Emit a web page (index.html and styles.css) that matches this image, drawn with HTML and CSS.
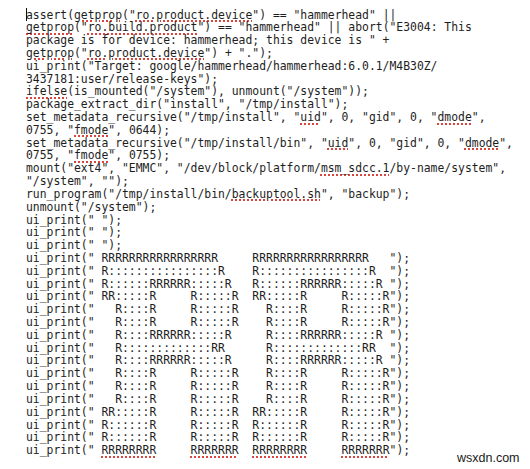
FILE: index.html
```html
<!DOCTYPE html>
<html>
<head>
<meta charset="utf-8">
<link rel="stylesheet" href="styles.css">
</head>
<body>
<div class="doc">
<span class="cursor"></span>
<pre class="code">assert(<span class="sp">getprop</span>("<span class="sp">ro.product.device</span>") == "hammerhead" ||
<span class="sp">getprop</span>("<span class="sp">ro.build.product</span>") == "hammerhead" || abort("E3004: This
package is for device: hammerhead; this device is " +
<span class="sp">getprop</span>("<span class="sp">ro.product.device</span>") + ".");
ui_print("Target: google/hammerhead/hammerhead:6.0.1/M4B30Z/
3437181:user/release-keys");
<span class="sp">ifelse</span>(is_mounted("/system"), unmount("/system"));
package_extract_dir("install", "/tmp/install");
set_metadata_recursive("/tmp/install", "<span class="sp">uid</span>", 0, "gid", 0, "<span class="sp">dmode</span>",
0755, "<span class="sp">fmode</span>", 0644);
set_metadata_recursive("/tmp/install/bin", "<span class="sp">uid</span>", 0, "gid", 0, "<span class="sp">dmode</span>",
0755, "<span class="sp">fmode</span>", 0755);
mount("ext4", "EMMC", "/dev/block/platform/<span class="sp">msm_sdcc.1</span>/by-name/system",
"/system", "");
run_program("/tmp/install/bin/<span class="sp">backuptool.sh</span>", "backup");
unmount("/system");
ui_print(" ");
ui_print(" ");
ui_print(" ");
ui_print(" RRRRRRRRRRRRRRRRR     RRRRRRRRRRRRRRRRR   ");
ui_print(" R::::::::::::::::R    R::::::::::::::::R  ");
ui_print(" R::::::RRRRRR:::::R   R::::::RRRRRR:::::R ");
ui_print(" RR:::::R     R:::::R  RR:::::R     R:::::R");
ui_print("   R::::R     R:::::R    R::::R     R:::::R");
ui_print("   R::::R     R:::::R    R::::R     R:::::R");
ui_print("   R::::RRRRRR:::::R     R::::RRRRRR:::::R ");
ui_print("   R:::::::::::::RR      R:::::::::::::RR  ");
ui_print("   R::::RRRRRR:::::R     R::::RRRRRR:::::R ");
ui_print("   R::::R     R:::::R    R::::R     R:::::R");
ui_print("   R::::R     R:::::R    R::::R     R:::::R");
ui_print("   R::::R     R:::::R    R::::R     R:::::R");
ui_print(" RR:::::R     R:::::R  RR:::::R     R:::::R");
ui_print(" R::::::R     R:::::R  R::::::R     R:::::R");
ui_print(" R::::::R     R:::::R  R::::::R     R:::::R");
ui_print(" <span class="sp">RRRRRRRR</span>     <span class="sp">RRRRRRR</span>  <span class="sp">RRRRRRRR</span>     <span class="sp">RRRRRRR</span>");</pre>
<span class="mark">wsxdn.com</span>
</div>
</body>
</html>
```

FILE: styles.css
```css
html, body {
  margin: 0;
  padding: 0;
  background: #ffffff;
}

.doc {
  position: relative;
  width: 530px;
  height: 469px;
  box-sizing: border-box;
  padding: 8.5px 0 0 26px;
  overflow: hidden;
}

.code {
  margin: 0;
  font-family: "DejaVu Sans Mono", "Liberation Mono", monospace;
  font-size: 11.4px;
  line-height: 12.82px;
  color: #1e1e1e;
  white-space: pre;
}

.sp {
  text-decoration-line: underline;
  text-decoration-style: dotted;
  text-decoration-color: #d9453d;
  text-decoration-thickness: 1.5px;
  text-underline-offset: 1.5px;
}

.cursor {
  position: absolute;
  left: 26px;
  top: 8px;
  width: 1px;
  height: 13px;
  background: #111;
}

.mark {
  position: absolute;
  left: 457px;
  top: 451px;
  font-family: "Liberation Sans", Arial, sans-serif;
  font-size: 12.5px;
  color: #1a1a1a;
}
```
